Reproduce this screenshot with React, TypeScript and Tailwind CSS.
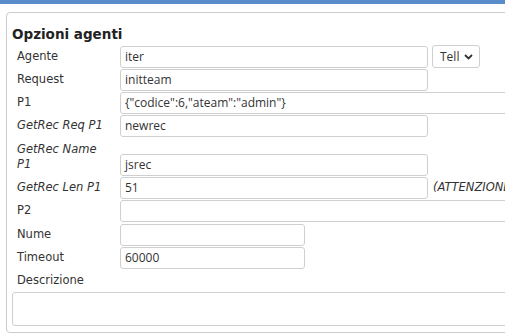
import React from "react";

const Input = ({ value = "", w = "w-[308px]", wide = false }: { value?: string; w?: string; wide?: boolean }) => (
  <div
    className={`${wide ? "w-[400px]" : w} h-[22px] border border-[#cfcfcf] rounded-[3px] bg-white flex items-center px-[4px] text-[12px] text-[#333] whitespace-nowrap overflow-hidden`}
    style={{ fontFamily: '"Open Sans", sans-serif' }}
  >
    {value}
  </div>
);

const Row = ({ label, italic = false, children, h = "h-[23px]" }: { label: React.ReactNode; italic?: boolean; children: React.ReactNode; h?: string }) => (
  <div className={`flex items-center ${h}`}>
    <div className={`w-[108px] shrink-0 pl-[5px] text-[11.5px] text-[#333] ${italic ? "italic" : ""}`}>{label}</div>
    <div className="flex items-center gap-[4px]">{children}</div>
  </div>
);

export default function App() {
  return (
    <div className="w-[505px] h-[335px] overflow-hidden bg-white" style={{ fontFamily: '"DejaVu Sans", sans-serif' }}>
      <div className="h-[4px] bg-[#5a8dca]" />
      <div className="ml-[6px] mt-[8px] w-[540px] h-[321px] border border-[#cccccc] rounded-[4px] pl-[5px] pt-[13px]">
        <div className="text-[13.5px] font-bold text-[#222] leading-[16px] mb-[3px]">Opzioni agenti</div>
        <Row label="Agente">
          <Input value="iter" />
          <div
            className="w-[48px] h-[23px] border border-[#cfcfcf] rounded-[3px] flex items-center pl-[7px] gap-[5px] text-[12px] text-[#333]"
            style={{ fontFamily: '"Open Sans", sans-serif' }}
          >
            <span>Tell</span>
            <svg width="9" height="6" viewBox="0 0 9 6"><path d="M1 1l3.5 3.5L8 1" stroke="#333" strokeWidth="1.8" fill="none" /></svg>
          </div>
        </Row>
        <Row label="Request">
          <Input value="initteam" />
        </Row>
        <Row label="P1">
          <Input value={'{"codice":6,"ateam":"admin"}'} wide />
        </Row>
        <Row label="GetRec Req P1" italic h="h-[24px]">
          <Input value="newrec" />
        </Row>
        <div className="flex items-end h-[38px]">
          <div className="w-[108px] shrink-0 pl-[5px] text-[11.5px] text-[#333] italic leading-[15px] pb-[4px]">GetRec Name<br />P1</div>
          <Input value="jsrec" />
        </div>
        <Row label="GetRec Len P1" italic>
          <Input value="51" />
          <span className="ml-[1px] text-[11.5px] italic text-[#333] whitespace-nowrap">(ATTENZIONE</span>
        </Row>
        <Row label="P2" h="h-[24px]">
          <Input wide />
        </Row>
        <Row label="Nume">
          <Input w="w-[185px]" />
        </Row>
        <Row label="Timeout">
          <Input value="60000" w="w-[185px]" />
        </Row>
        <div className="h-[23px] flex items-center pl-[5px] text-[11.5px] text-[#333]">Descrizione</div>
        <div className="h-[34px] w-[520px] border border-[#cfcfcf] rounded-[3px]" />
      </div>
    </div>
  );
}
